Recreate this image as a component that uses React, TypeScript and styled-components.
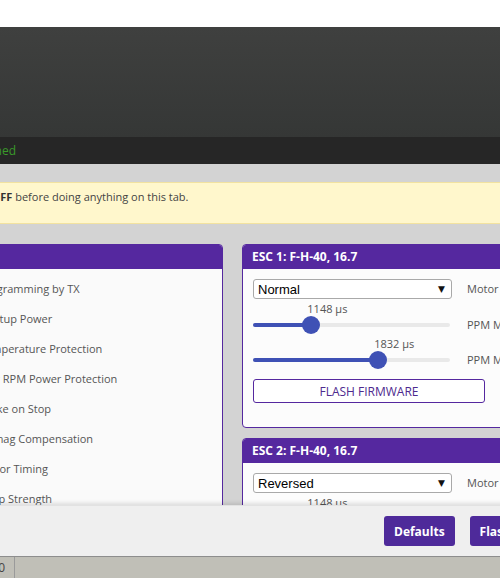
import React from 'react';
import styled, { createGlobalStyle } from 'styled-components';

const Global = createGlobalStyle`
  html, body { margin: 0; padding: 0; background: #ffffff; overflow: hidden; }
  body { font-family: "Open Sans", "Noto Sans", sans-serif; }
  * { box-sizing: border-box; }
`;

const PURPLE = '#55289f';

const Root = styled.div`
  width: 1015px;
  height: 578px;
  margin-left: -277px;
  display: flex;
  flex-direction: column;
`;

const TopSpace = styled.div`
  height: 27px;
  flex: none;
  background: #ffffff;
`;

const Header = styled.header`
  height: 110px;
  flex: none;
  background: linear-gradient(#3f403f, #353736);
`;

const LogBar = styled.div`
  height: 27px;
  flex: none;
  background: #262626;
  display: flex;
  align-items: center;
`;

const LogLine = styled.div`
  width: 293px;
  text-align: right;
  white-space: nowrap;
  overflow: hidden;
  color: #3a9a2a;
  font-size: 12px;
  line-height: 27px;
`;

const Content = styled.main`
  flex: 1;
  min-height: 0;
  overflow: hidden;
  background: #d3d3d3;
  padding: 18px 10px 0;
`;

const Note = styled.div`
  background: #fff7cc;
  border: 1px solid #f2e2a0;
  padding: 6px 10px 19px 13px;
  font-size: 11px;
  line-height: 15px;
  color: #444;
  white-space: nowrap;
  b { color: #333; font-weight: 700; }
`;

const Columns = styled.div`
  margin-top: 20px;
  display: grid;
  grid-template-columns: 490px 486px;
  column-gap: 19px;
  align-items: start;
`;

const EscColumn = styled.div`
  display: flex;
  flex-direction: column;
  gap: 10px;
`;

const Panel = styled.section<{ $tint?: string }>`
  border: 1px solid ${PURPLE};
  border-radius: 4px;
  overflow: hidden;
  background: ${(p) => p.$tint || '#fafafa'};
`;

const PanelHead = styled.div`
  height: 24px;
  line-height: 24px;
  padding: 0 9px;
  background: ${PURPLE};
  color: #ffffff;
  font-weight: 700;
  font-size: 12px;
  white-space: nowrap;
`;

const CommonBody = styled.div`
  padding: 4px 10px 10px;
`;

const SettingRow = styled.div`
  height: 30px;
  display: flex;
  align-items: center;
  gap: 16px;
`;

const Control = styled.div`
  width: 219px;
  height: 20px;
  flex: none;
  border: 1px solid #a6a6a6;
  border-radius: 3px;
  background: #fff;
  font-family: "Liberation Sans", Arial, sans-serif;
  font-size: 13px;
  line-height: 18px;
  padding: 0 4px;
  color: #000;
`;

const SettingLabel = styled.span`
  font-size: 11px;
  color: #555;
  white-space: nowrap;
`;

const EscBody = styled.div`
  padding: 10px 10px 24px;
  display: flex;
  flex-direction: column;
`;

const SelectRow = styled.div`
  display: flex;
  align-items: center;
  gap: 15px;
`;

const Select = styled.div`
  width: 199px;
  height: 20px;
  flex: none;
  border: 1px solid #a9a9a9;
  border-radius: 3px;
  background: #ffffff;
  display: flex;
  align-items: center;
  justify-content: space-between;
  padding: 0 6px 0 4px;
  font-family: "Liberation Sans", Arial, sans-serif;
  font-size: 13px;
  color: #000;
`;

const Arrow = styled.span`
  font-family: "DejaVu Sans", sans-serif;
  font-size: 9px;
  color: #111;
`;

const SideLabel = styled.span<{ $lh: number }>`
  font-size: 11px;
  line-height: ${(p) => p.$lh}px;
  color: #555;
  white-space: nowrap;
`;

const SliderRow = styled.div`
  margin-top: 2px;
  display: flex;
  align-items: flex-end;
  gap: 17px;
`;

const SliderBox = styled.div`
  width: 197px;
  flex: none;
  display: flex;
  flex-direction: column;
`;

const ValueLine = styled.div`
  position: relative;
  height: 15px;
`;

const Value = styled.span`
  position: absolute;
  top: 0;
  font-size: 11px;
  line-height: 15px;
  color: #555;
  white-space: nowrap;
`;

const TrackArea = styled.div`
  height: 18px;
  display: flex;
  align-items: center;
`;

const Track = styled.div`
  position: relative;
  width: 100%;
  height: 4px;
  border-radius: 2px;
  background: #e9e9e9;
`;

const Fill = styled.div`
  height: 100%;
  border-radius: 2px;
  background: #3f51b5;
`;

const Thumb = styled.div`
  position: absolute;
  top: -7px;
  width: 18px;
  height: 18px;
  border-radius: 50%;
  background: #3f51b5;
`;

const FlashButton = styled.button`
  margin-top: 10px;
  width: 232px;
  height: 24px;
  border: 1px solid ${PURPLE};
  border-radius: 3px;
  background: #ffffff;
  color: #4d2a8e;
  font-family: "Open Sans", sans-serif;
  font-size: 12px;
  padding: 0;
  cursor: pointer;
`;

const Toolbar = styled.div`
  position: relative;
  z-index: 1;
  height: 51px;
  flex: none;
  background: #efefef;
  border-top: 1px solid #e2e2e2;
  box-shadow: 0 -2px 4px rgba(0, 0, 0, 0.12);
  display: flex;
  align-items: center;
  gap: 15px;
  padding-left: 661px;
`;

const ToolButton = styled.button`
  height: 30px;
  padding: 0 10px;
  border: none;
  border-radius: 3px;
  background: #4e2a9a;
  color: #ffffff;
  font-family: "Open Sans", sans-serif;
  font-weight: 700;
  font-size: 12px;
  white-space: nowrap;
`;

const StatusBar = styled.footer`
  height: 22px;
  flex: none;
  background: #c0bfb7;
  border-top: 1px solid #8f8f8f;
  display: flex;
  font-size: 12px;
  color: #444;
`;

const StatusCell = styled.div`
  width: 292px;
  border-right: 1px solid #9a9a9a;
  text-align: right;
  padding-right: 9px;
  line-height: 21px;
  white-space: nowrap;
`;

type SliderProps = { value: number; min: number; max: number; label: string };

const Slider: React.FC<SliderProps> = ({ value, min, max, label }) => {
  const pct = ((value - min) / (max - min)) * 100;
  return (
    <SliderRow>
      <SliderBox>
        <ValueLine>
          <Value style={{ left: `calc(${pct}% - 4px)` }}>{value} µs</Value>
        </ValueLine>
        <TrackArea>
          <Track>
            <Fill style={{ width: `${pct}%` }} />
            <Thumb style={{ left: `calc(${pct}% - 9px)` }} />
          </Track>
        </TrackArea>
      </SliderBox>
      <SideLabel $lh={18}>{label}</SideLabel>
    </SliderRow>
  );
};

const Esc: React.FC<{ index: number; direction: string }> = ({ index, direction }) => (
  <Panel $tint="#fcfcfc">
    <PanelHead>ESC {index}: F-H-40, 16.7</PanelHead>
    <EscBody>
      <SelectRow>
        <Select>
          <span>{direction}</span>
          <Arrow>▼</Arrow>
        </Select>
        <SideLabel $lh={20}>Motor Direction</SideLabel>
      </SelectRow>
      <Slider value={1148} min={1000} max={1500} label="PPM Min Throttle" />
      <Slider value={1832} min={1504} max={2020} label="PPM Max Throttle" />
      <FlashButton>FLASH FIRMWARE</FlashButton>
    </EscBody>
  </Panel>
);

const settings: [string, string][] = [
  ['Enabled', 'Programming by TX'],
  ['1.000', 'Startup Power'],
  ['Enabled', 'Temperature Protection'],
  ['Enabled', 'Low RPM Power Protection'],
  ['Disabled', 'Brake on Stop'],
  ['Low', 'Demag Compensation'],
  ['Medium', 'Motor Timing'],
  ['40', 'Beep Strength'],
  ['80', 'Beacon Strength'],
  ['10 minutes', 'Beacon Delay'],
];

export default function App() {
  return (
    <>
      <Global />
      <Root>
        <TopSpace />
        <Header />
        <LogBar>
          <LogLine>Serial port successfully opened</LogLine>
        </LogBar>
        <Content>
          <Note>
            Please remove all propellers and switch arming <b>OFF</b> before doing anything on this tab.
          </Note>
          <Columns>
            <Panel>
              <PanelHead>Common Settings</PanelHead>
              <CommonBody>
                {settings.map(([v, l]) => (
                  <SettingRow key={l}>
                    <Control>{v}</Control>
                    <SettingLabel>{l}</SettingLabel>
                  </SettingRow>
                ))}
              </CommonBody>
            </Panel>
            <EscColumn>
              <Esc index={1} direction="Normal" />
              <Esc index={2} direction="Reversed" />
            </EscColumn>
          </Columns>
        </Content>
        <Toolbar>
          <ToolButton>Defaults</ToolButton>
          <ToolButton>Flash All</ToolButton>
          <ToolButton>Read Setup</ToolButton>
          <ToolButton>Write Setup</ToolButton>
        </Toolbar>
        <StatusBar>
          <StatusCell>Packet error: 0</StatusCell>
        </StatusBar>
      </Root>
    </>
  );
}
